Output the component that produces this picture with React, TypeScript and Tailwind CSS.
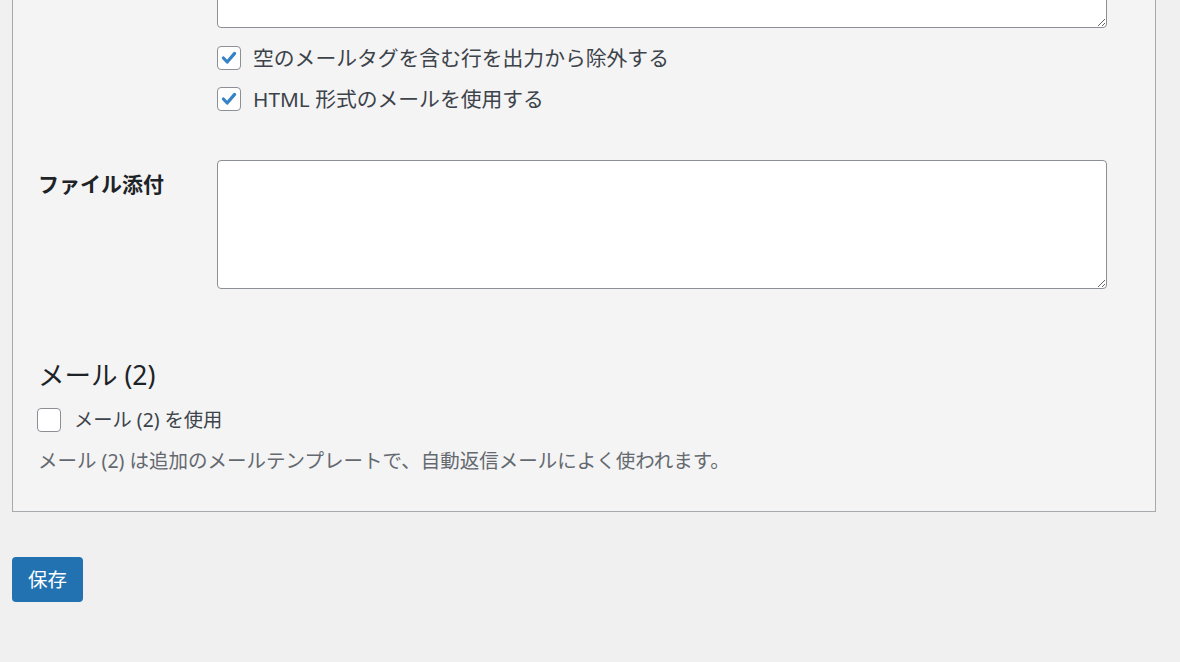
import React from "react";

function Check({ checked }: { checked: boolean }) {
  return (
    <div className="w-[24px] h-[24px] shrink-0 rounded-[4px] border border-[#8c8f94] bg-white flex items-center justify-center">
      {checked && (
        <svg width="20" height="20" viewBox="0 0 20 20">
          <path d="M4.4 10 L8.2 14 L15.6 5.4" fill="none" stroke="#3582c4" strokeWidth="3.2" strokeLinecap="round" strokeLinejoin="round" />
        </svg>
      )}
    </div>
  );
}

export default function App() {
  const font = "font-['Noto_Sans','Noto_Sans_CJK_JP',sans-serif]";
  return (
    <div className={`h-[662px] overflow-hidden bg-[#f0f0f1] ${font}`}>
      <div className="ml-[12px] w-[1144px] -mt-[61px] border border-[#a7aaad] bg-[#f4f4f4] pl-[24px] pr-[48px] pb-[36px]">
        <div className="flex">
          <div className="w-[180px] shrink-0" />
          <div className="flex-1">
            <textarea readOnly className="block w-full h-[88px] rounded-[4px] border border-[#8c8f94] bg-white" />
            <div className="mt-[18px] flex flex-col gap-[17px]">
              <label className="flex items-center gap-[12px] h-[24px]">
                <Check checked />
                <span className="text-[20.8px] leading-[24px] text-[#3c434a]">空のメールタグを含む行を出力から除外する</span>
              </label>
              <label className="flex items-center gap-[12px] h-[24px]">
                <Check checked />
                <span className="text-[20.8px] leading-[24px] text-[#3c434a]">HTML 形式のメールを使用する</span>
              </label>
            </div>
          </div>
        </div>

        <div className="flex mt-[49px]">
          <div className="w-[180px] shrink-0 pl-[1px] pt-[9px]">
            <span className="text-[21px] leading-[30px] font-bold text-[#1d2327]">ファイル添付</span>
          </div>
          <div className="flex-1">
            <textarea readOnly className="block w-full h-[129px] rounded-[4px] border border-[#8c8f94] bg-white" />
          </div>
        </div>

        <h2 className="mt-[70px] pl-[1px] text-[26.5px] leading-[32px] text-[#1d2327]">メール (2)</h2>
        <label className="mt-[17px] flex items-center gap-[13px] h-[24px]">
          <Check checked={false} />
          <span className="text-[19.3px] leading-[24px] text-[#3c434a]">メール (2) を使用</span>
        </label>
        <p className="mt-[15px] pl-[1px] text-[19.5px] leading-[28px] text-[#646970]">
          メール (2) は追加のメールテンプレートで、自動返信メールによく使われます。
        </p>
      </div>

      <button className="ml-[12px] mt-[45px] w-[71px] h-[45px] rounded-[4px] bg-[#2271b1] text-white text-[19.5px] leading-[45px]">
        保存
      </button>
    </div>
  );
}
